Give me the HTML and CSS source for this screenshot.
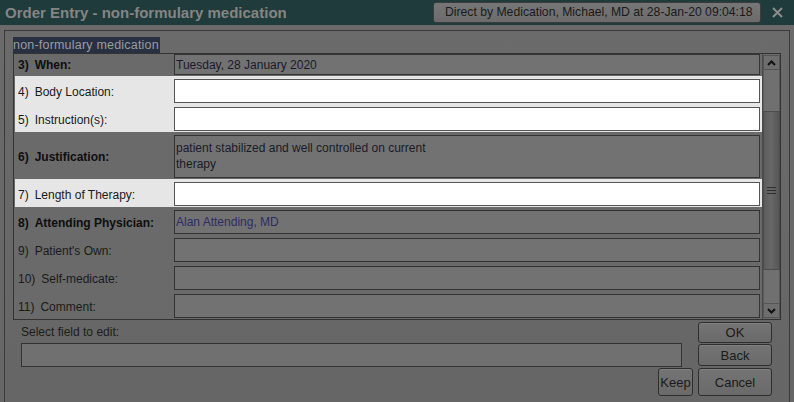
FILE: index.html
```html
<!DOCTYPE html>
<html>
<head>
<meta charset="utf-8">
<link rel="stylesheet" href="styles.css">
</head>
<body>
<div class="titlebar">
  <span class="title">Order Entry - non-formulary medication</span>
  <div class="tb-right">
    <span class="user-btn">Direct by Medication, Michael, MD at 28-Jan-20 09:04:18</span>
    <svg class="close" width="11" height="11" viewBox="0 0 11 11"><path d="M1 1L10 10M10 1L1 10" stroke="#8c8c8c" stroke-width="2"/></svg>
  </div>
</div>
<div class="panel">
  <div class="caption">non-formulary medication</div>
  <div class="table">
    <div class="rows">
      <div class="row r3"><div class="lbl b"><span class="n">3)</span>When:</div><div class="fld"><span class="val">Tuesday, 28 January 2020</span></div></div>
      <div class="row light"><div class="lbl"><span class="n">4)</span>Body Location:</div><div class="fld inp"></div></div>
      <div class="row light"><div class="lbl"><span class="n">5)</span>Instruction(s):</div><div class="fld inp"></div></div>
      <div class="row r6"><div class="lbl b"><span class="n">6)</span>Justification:</div><div class="fld multi"><span class="val">patient stabilized and well controlled on current<br>therapy</span></div></div>
      <div class="row light"><div class="lbl"><span class="n">7)</span>Length of Therapy:</div><div class="fld inp"></div></div>
      <div class="row"><div class="lbl b"><span class="n">8)</span>Attending Physician:</div><div class="fld"><span class="val blue">Alan Attending, MD</span></div></div>
      <div class="row"><div class="lbl"><span class="n">9)</span>Patient's Own:</div><div class="fld"></div></div>
      <div class="row"><div class="lbl"><span class="n">10)</span>Self-medicate:</div><div class="fld"></div></div>
      <div class="row"><div class="lbl"><span class="n">11)</span>Comment:</div><div class="fld"></div></div>
    </div>
    <div class="scrollbar">
      <div class="sb-btn"><svg width="9" height="6" viewBox="0 0 9 6"><path d="M1 5L4.5 1.5L8 5" stroke="#111" stroke-width="2" fill="none"/></svg></div>
      <div class="sb-track t1"></div>
      <div class="sb-thumb"><svg width="9" height="7" viewBox="0 0 9 7"><path d="M0 0.5H9M0 3.5H9M0 6.5H9" stroke="#2e2e2e" stroke-width="1"/></svg></div>
      <div class="sb-track t2"></div>
      <div class="sb-btn down"><svg width="9" height="6" viewBox="0 0 9 6"><path d="M1 1L4.5 4.5L8 1" stroke="#111" stroke-width="2" fill="none"/></svg></div>
    </div>
  </div>
  <div class="bottom">
    <div class="left">
      <div class="sel-label">Select field to edit:</div>
      <div class="sel-input"></div>
      <button class="btn keep">Keep</button>
    </div>
    <div class="right">
      <button class="btn ok">OK</button>
      <button class="btn back">Back</button>
      <button class="btn cancel">Cancel</button>
    </div>
  </div>
</div>
</body>
</html>
```
FILE: styles.css
```css
html, body {
  margin: 0;
  padding: 0;
  height: 100%;
  overflow: hidden;
}
body {
  background: linear-gradient(to bottom, #6b6b6b, #666666);
  font-family: "Liberation Sans", Arial, sans-serif;
  font-size: 12px;
  color: #1c1c1c;
}
.titlebar {
  height: 25px;
  background: #1f3b3b;
  display: flex;
  align-items: center;
  justify-content: space-between;
}
.title {
  padding-left: 5px;
  font-size: 15px;
  font-weight: bold;
  color: #858585;
}
.tb-right {
  display: flex;
  align-items: center;
  padding-right: 11px;
}
.user-btn {
  display: block;
  white-space: nowrap;
  height: 19px;
  line-height: 19px;
  width: 304px;
  padding: 0 11px;
  background: linear-gradient(to bottom, #767676, #6c6c6c);
  border: 1px solid #3c3c3c;
  border-radius: 3px;
  font-size: 12.2px;
  color: #1a1a1a;
  margin-right: 11px;
  text-align: center;
}
.close { display: block; }
.panel {
  margin: 5px 4px 0 4px;
  border: 1px solid #3a3a3a;
  border-bottom: none;
  padding: 6px 8px 0 8px;
  height: 372px;
  box-sizing: border-box;
}
.caption {
  display: inline-block;
  height: 16px;
  line-height: 16px;
  background: #283042;
  color: #9a9ca2;
  font-size: 12.5px;
  padding: 0 1px 0 0;
  letter-spacing: 0.2px;
  vertical-align: top;
}
.table {
  display: flex;
  border: 1px solid #333;
  background: #6a6a6a;
}
.rows {
  flex: 1;
  margin-left: 1px;
}
.row {
  display: flex;
  height: 28px;
}
.row.r3 { height: 22px; }
.row.r6 { height: 47px; }
.row.light { background: #e6e6e6; }
.lbl {
  width: 155px;
  padding-left: 3px;
  display: flex;
  align-items: center;
  padding-top: 3px;
  color: #1a1a1a;
}
.row.r3 .lbl { padding-top: 0; }
.lbl.b { font-weight: bold; color: #0e0e0e; }
.lbl .n { margin-right: 6px; }
.fld {
  flex: 1;
  margin: 3px 2px 1px 1px;
  border: 1px solid #333;
  background: #727272;
  display: flex;
  align-items: center;
  padding-left: 1px;
}
.row.r3 .fld { margin-top: 0; }
.fld.inp { background: #fff; border-color: #555; }
.fld.multi { align-items: flex-start; padding-top: 4px; }
.val { color: #1a1a28; line-height: 16px; }
.val.blue { color: #2c2c66; }
.scrollbar {
  width: 17px;
  border-left: 1px solid #4a4a4a;
  padding: 1px 0;
  display: flex;
  flex-direction: column;
  background: #6a6a6a;
}
.sb-btn {
  height: 15px;
  background: #6e6e6e;
  border: 1px solid #555;
  box-sizing: border-box;
  display: flex;
  align-items: center;
  justify-content: center;
}
.sb-btn.down { flex: 1; }
.sb-track {
  background: #707070;
  border-left: 1px solid #5a5a5a;
  border-right: 1px solid #5a5a5a;
}
.sb-track.t1 { height: 41px; }
.sb-track.t2 { height: 33px; }
.sb-thumb {
  height: 159px;
  box-sizing: border-box;
  border: 1px solid #4c4c4c;
  background: linear-gradient(to right, #5c5c5c, #686868 45%, #565656);
  display: flex;
  align-items: center;
  justify-content: center;
}
.bottom {
  display: grid;
  grid-template-columns: 1fr 74px;
  column-gap: 5px;
  padding: 2px 9px 0 8px;
}
.left, .right {
  display: flex;
  flex-direction: column;
}
.sel-label {
  height: 20px;
  line-height: 20px;
  color: #1c1c1c;
}
.sel-input {
  height: 22px;
  margin-top: 1px;
  margin-right: 11px;
  border: 1px solid #333;
  background: #707070;
}
.btn {
  font-family: "Liberation Sans", Arial, sans-serif;
  font-size: 13px;
  color: #1a1a1a;
  background: linear-gradient(to bottom, #747474, #6a6a6a);
  border: 1px solid #2e2e2e;
  border-radius: 3px;
  box-shadow: inset 0 1px 0 #808080;
  padding: 0;
  margin: 0;
}
.keep {
  align-self: flex-end;
  width: 35px;
  height: 28px;
  margin-top: 1px;
}
.ok { height: 21px; }
.back { height: 22px; margin-top: 1px; }
.cancel { height: 28px; margin-top: 2px; }
```
